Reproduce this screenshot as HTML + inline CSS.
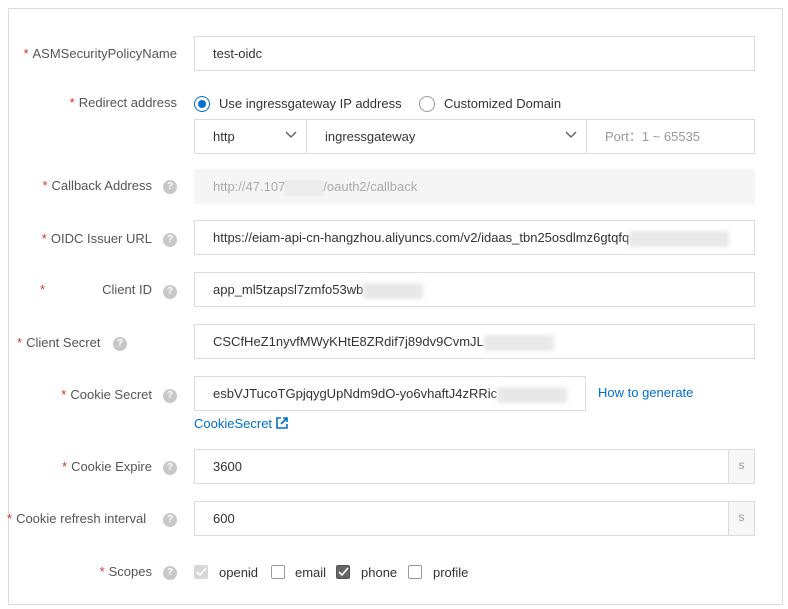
<!DOCTYPE html><html><head><style>
body{margin:0;width:788px;height:609px;background:#fff;font-family:"Liberation Sans",sans-serif;font-size:13px;color:#333;position:relative;overflow:hidden}
.a{position:absolute;white-space:nowrap}
.box{position:absolute;border:1px solid #dcdcdc;box-sizing:border-box;height:35px;line-height:33px;padding-left:18px;background:#fff}
.lb{position:absolute;white-space:nowrap;color:#555;line-height:20px}
.lb b{color:#d93026;font-weight:normal;margin-right:4px}
.q{position:absolute;width:14px;height:14px;border-radius:50%;background:#c8c8c8;color:#fff;font-size:10px;font-weight:bold;text-align:center;line-height:14px}
.suf{position:absolute;right:0;top:0;width:25px;height:33px;border-left:1px solid #dcdcdc;background:#f7f7f7;color:#999;font-size:12px;text-align:center;line-height:31px;padding:0}
.cb{position:absolute;width:14px;height:14px;border:1px solid #999;border-radius:2px;box-sizing:border-box}
.lk{color:#0070cc}
</style></head><body>
<div class="a" style="left:8px;top:8px;width:775px;height:597px;border:1px solid #dcdcdc;box-sizing:border-box"></div>

<div class="lb" style="right:611px;top:44px"><b>*</b>ASMSecurityPolicyName</div>
<div class="box" style="left:194px;top:36px;width:561px">test-oidc</div>

<div class="lb" style="right:611px;top:93px"><b>*</b>Redirect address</div>
<div class="a" style="left:194px;top:96px;width:16px;height:16px;border:1px solid #0070cc;border-radius:50%;box-sizing:border-box"><div style="position:absolute;left:3px;top:3px;width:8px;height:8px;border-radius:50%;background:#0070cc"></div></div>
<div class="a" style="left:219px;top:95px;line-height:18px">Use ingressgateway IP address</div>
<div class="a" style="left:419px;top:96px;width:16px;height:16px;border:1px solid #999;border-radius:50%;box-sizing:border-box"></div>
<div class="a" style="left:444px;top:95px;line-height:18px">Customized Domain</div>

<div class="box" style="left:194px;top:119px;width:113px">http<svg class="a" style="left:90px;top:11px" width="12" height="8"><path d="M1 1l5 5 5-5" fill="none" stroke="#666" stroke-width="1.5"/></svg></div>
<div class="box" style="left:306px;top:119px;width:281px">ingressgateway<svg class="a" style="left:258px;top:11px" width="12" height="8"><path d="M1 1l5 5 5-5" fill="none" stroke="#666" stroke-width="1.5"/></svg></div>
<div class="box" style="left:586px;top:119px;width:169px;color:#999">Port：1 ~ 65535</div>

<div class="lb" style="right:636px;top:176px"><b>*</b>Callback Address</div><div class="q" style="left:163px;top:180px">?</div>
<div class="box" style="left:194px;top:169px;width:561px;background:#f5f5f5;border-color:#f5f5f5;color:#aaa">http://47.107<span style="display:inline-block;width:38px;height:16px;background:#ececec;vertical-align:middle"></span>/oauth2/callback</div>

<div class="lb" style="right:636px;top:229px"><b>*</b>OIDC Issuer URL</div><div class="q" style="left:163px;top:233px">?</div>
<div class="box" style="left:194px;top:220px;width:561px;overflow:hidden">https://eiam-api-cn-hangzhou.aliyuncs.com/v2/idaas_tbn25osdlmz6gtqfq<span style="display:inline-block;width:100px;height:16px;background:#e8e8e8;vertical-align:middle;filter:blur(2px)"></span></div>

<div class="lb" style="left:40px;top:280px"><b>*</b></div><div class="lb" style="right:636px;top:280px">Client ID</div><div class="q" style="left:163px;top:285px">?</div>
<div class="box" style="left:194px;top:272px;width:561px">app_ml5tzapsl7zmfo53wb<span style="display:inline-block;width:60px;height:16px;background:#e8e8e8;vertical-align:middle;filter:blur(2px)"></span></div>

<div class="lb" style="left:17px;top:333px"><b>*</b>Client Secret</div><div class="q" style="left:113px;top:337px">?</div>
<div class="box" style="left:194px;top:324px;width:561px">CSCfHeZ1nyvfMWyKHtE8ZRdif7j89dv9CvmJL<span style="display:inline-block;width:70px;height:16px;background:#e8e8e8;vertical-align:middle;filter:blur(2px)"></span></div>

<div class="lb" style="right:636px;top:385px"><b>*</b>Cookie Secret</div><div class="q" style="left:163px;top:389px">?</div>
<div class="box" style="left:194px;top:376px;width:392px;overflow:hidden">esbVJTucoTGpjqygUpNdm9dO-yo6vhaftJ4zRRic<span style="display:inline-block;width:70px;height:16px;background:#e8e8e8;vertical-align:middle;filter:blur(2px)"></span></div>
<div class="a lk" style="left:598px;top:384px;line-height:18px">How to generate</div>
<div class="a lk" style="left:194px;top:415px;line-height:18px">CookieSecret <svg width="12" height="12" style="vertical-align:-1px"><path d="M5 1H1v10h10V7" fill="none" stroke="#0070cc" stroke-width="1.6"/><path d="M7 1h4v4M11 1L5 7" fill="none" stroke="#0070cc" stroke-width="1.6"/></svg></div>

<div class="lb" style="right:636px;top:457px"><b>*</b>Cookie Expire</div><div class="q" style="left:163px;top:461px">?</div>
<div class="box" style="left:194px;top:449px;width:561px">3600<div class="suf">s</div></div>

<div class="lb" style="left:7px;top:509px"><b>*</b>Cookie refresh interval</div><div class="q" style="left:163px;top:513px">?</div>
<div class="box" style="left:194px;top:501px;width:561px">600<div class="suf">s</div></div>

<div class="lb" style="right:636px;top:562px"><b>*</b>Scopes</div><div class="q" style="left:163px;top:566px">?</div>
<div class="cb" style="left:194px;top:565px;background:#d8d8d8;border-color:#d8d8d8"><svg class="a" style="left:1px;top:1px" width="11" height="10"><path d="M1 5l3 3 6-7" fill="none" stroke="#fff" stroke-width="1.6"/></svg></div>
<div class="a" style="left:219px;top:564px;line-height:18px">openid</div>
<div class="cb" style="left:271px;top:565px"></div>
<div class="a" style="left:295px;top:564px;line-height:18px">email</div>
<div class="cb" style="left:336px;top:565px;background:#666;border-color:#555"><svg class="a" style="left:1px;top:1px" width="11" height="10"><path d="M1 5l3 3 6-7" fill="none" stroke="#fff" stroke-width="1.6"/></svg></div>
<div class="a" style="left:361px;top:564px;line-height:18px">phone</div>
<div class="cb" style="left:408px;top:565px"></div>
<div class="a" style="left:433px;top:564px;line-height:18px">profile</div>
</body></html>
